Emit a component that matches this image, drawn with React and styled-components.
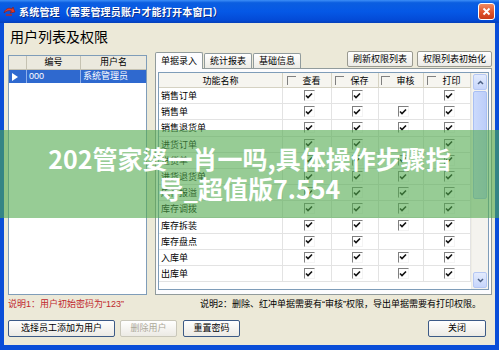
import React from "react";
import styled, { createGlobalStyle } from "styled-components";

const GlobalStyle = createGlobalStyle`
  html, body {
    margin: 0;
    padding: 0;
    background: #ffffff;
  }
  body {
    font-family: "Liberation Sans", "Noto Sans CJK SC", sans-serif;
  }
`;

const rows = [
  ["销售订单", 1, 1, 0, 1],
  ["销售单", 1, 1, 1, 1],
  ["销售退货单", 1, 1, 1, 1],
  ["进货订单", 1, 1, 0, 1],
  ["进货单", 1, 1, 1, 1],
  ["进货退货单", 1, 1, 1, 1],
  ["库存报溢", 1, 1, 1, 1],
  ["库存调拨", 1, 1, 1, 1],
  ["库存拆装", 1, 1, 1, 1],
  ["库存盘点", 1, 1, 0, 1],
  ["入库单", 1, 1, 1, 1],
  ["出库单", 1, 1, 1, 1],
];

const columns = ["查看", "保存", "审核", "打印"];
const colWidths = "124px 49px 47px 45px 47px";

const Window = styled.div`
  position: relative;
  width: 499px;
  height: 350px;
  overflow: hidden;
  display: flex;
  flex-direction: column;
`;

const TitleBar = styled.div`
  height: 23px;
  flex: none;
  display: flex;
  align-items: center;
  padding: 0 4px 0 3px;
  background: linear-gradient(to bottom, #3d8ef7 0%, #0b5ee0 12%, #0558e6 50%, #034ad6 88%, #0540b8 100%);
  color: #ffffff;
`;

const TitleText = styled.span`
  margin-left: 3px;
  font-size: 10px;
  font-weight: bold;
  letter-spacing: 0.2px;
  text-shadow: 1px 1px 0 #0a2f8c;
`;

const CloseButton = styled.div`
  margin-left: auto;
  width: 15px;
  height: 15px;
  border: 1px solid #ffffff;
  border-radius: 3px;
  background: linear-gradient(to bottom, #f08a62 0%, #e0532b 55%, #c83c1a 100%);
  display: flex;
  align-items: center;
  justify-content: center;
`;

const Body = styled.div`
  flex: 1;
  display: flex;
  flex-direction: column;
  background: #ece9d8;
  border: 4px solid #0a4ed8;
  border-top: none;
  border-bottom-width: 5px;
  padding: 0 3px 0 4px;
  font-size: 9px;
  color: #000000;
`;

const Heading = styled.div`
  height: 28px;
  line-height: 28px;
  padding-left: 2px;
  font-size: 14px;
`;

const Main = styled.div`
  height: 244px;
  display: flex;
`;

const UserGrid = styled.div`
  width: 141px;
  margin-top: 4px;
  border: 1px solid #7f9db9;
  background: #ffffff;
  box-sizing: border-box;
`;

const UserRow = styled.div`
  display: grid;
  grid-template-columns: 18px 54px 1fr;
  height: 13px;
  line-height: 13px;
  background: ${p => (p.header ? "#ebe9de" : p.selected ? "#2f69cf" : "#ffffff")};
  color: ${p => (p.selected ? "#ffffff" : "#000000")};
  border-bottom: 1px solid ${p => (p.header ? "#c5c2b2" : "#ffffff")};
`;

const UserCell = styled.div`
  border-right: 1px solid ${p => (p.selected ? "#8fb0ea" : "#c5c2b2")};
  padding-left: ${p => (p.center ? "0" : "2px")};
  text-align: ${p => (p.center ? "center" : "left")};
  overflow: hidden;
  white-space: nowrap;
  &:last-child {
    border-right: none;
  }
`;

const Indicator = styled.div`
  display: flex;
  align-items: center;
  padding-left: 3px;
  border-right: 1px solid #8fb0ea;
`;

const RightPanel = styled.div`
  flex: 1;
  margin-left: 8px;
  display: flex;
  flex-direction: column;
`;

const TopStrip = styled.div`
  height: 17px;
  display: flex;
  align-items: flex-end;
`;

const Tab = styled.div`
  height: ${p => (p.active ? "16px" : "14px")};
  line-height: ${p => (p.active ? "16px" : "14px")};
  padding: 0 5px;
  margin-right: 1px;
  border: 1px solid #919b9c;
  border-bottom: none;
  border-radius: 2px 2px 0 0;
  background: ${p => (p.active ? "#fcfcfe" : "linear-gradient(to bottom, #ffffff, #ecebe5)")};
  font-size: 9px;
  margin-bottom: ${p => (p.active ? "-1px" : "0")};
  position: relative;
  z-index: ${p => (p.active ? 1 : 0)};
`;

const Tools = styled.div`
  margin-left: auto;
  align-self: flex-start;
  display: flex;
  gap: 4px;
`;

const ToolButton = styled.div`
  height: 16px;
  box-sizing: border-box;
  line-height: 14px;
  padding: 0 5px;
  border: 1px solid #9a9a90;
  border-radius: 2px;
  background: linear-gradient(to bottom, #ffffff, #ecebe6);
`;

const TabPanel = styled.div`
  flex: 1;
  border: 1px solid #919b9c;
  background: #fcfcfe;
  padding: 3px 2px 4px 2px;
  display: flex;
`;

const TableBox = styled.div`
  flex: 1;
  display: flex;
  border: 1px solid #7f9db9;
  background: #ffffff;
  overflow: hidden;
`;

const Grid = styled.div`
  width: 312px;
  display: flex;
  flex-direction: column;
`;

const GridRow = styled.div`
  display: grid;
  grid-template-columns: ${colWidths};
  height: ${p => (p.header ? "15px" : "16.2px")};
  box-sizing: border-box;
  border-bottom: 1px solid ${p => (p.header ? "#d5d2c3" : "#e3e3e3")};
  background: ${p => (p.header ? "#f6f5f0" : "#ffffff")};
`;

const GridCell = styled.div`
  display: flex;
  align-items: center;
  justify-content: ${p => p.align || "center"};
  padding-left: ${p => (p.align === "flex-start" ? "2px" : "0")};
  border-right: 1px solid ${p => (p.header ? "#d5d2c3" : "#e3e3e3")};
  white-space: nowrap;
  overflow: hidden;
`;

const HeaderCheck = styled.span`
  width: 8px;
  height: 8px;
  border-top: 1px solid #808080;
  border-left: 1px solid #808080;
  margin-right: 6px;
  margin-left: -6px;
`;

const CheckBox = styled.span`
  width: 9px;
  height: 9px;
  border-top: 1px solid #808080;
  border-left: 1px solid #808080;
  border-right: 1px solid #f4f4f4;
  border-bottom: 1px solid #f4f4f4;
  margin-left: 4px;
  display: flex;
  align-items: center;
  justify-content: center;
`;

const ScrollBar = styled.div`
  width: 16px;
  display: flex;
  flex-direction: column;
  background: #f4f3ee;
  border-left: 1px solid #eeede5;
`;

const ArrowButton = styled.div`
  height: 14px;
  margin: 1px;
  border: 1px solid #b6c8f4;
  border-radius: 2px;
  background: linear-gradient(to bottom, #e3ebfd, #c6d5fb);
  display: flex;
  align-items: center;
  justify-content: center;
`;

const Thumb = styled.div`
  height: 106px;
  margin: 0 1px;
  border: 1px solid #a9bff3;
  border-radius: 2px;
  background: linear-gradient(to right, #cbdafc, #bccdf9);
`;

const Track = styled.div`
  flex: 1;
`;

const Notes = styled.div`
  height: 16px;
  display: grid;
  grid-template-columns: 192px 1fr;
  align-items: center;
`;

const Note = styled.span`
  color: ${p => p.color || "#000000"};
  white-space: nowrap;
`;

const ButtonRow = styled.div`
  margin-top: 9px;
  display: flex;
`;

const Button = styled.div`
  width: ${p => p.width}px;
  height: 17px;
  box-sizing: border-box;
  line-height: 15px;
  text-align: center;
  margin-left: ${p => p.gap || 0}px;
  border: 1px solid ${p => (p.disabled ? "#c9c7ba" : "#3c5a86")};
  border-radius: 2px;
  background: linear-gradient(to bottom, #ffffff, #eceae4);
  color: ${p => (p.disabled ? "#aca899" : "#000000")};
`;

const CloseBtn = styled(Button)`
  margin-left: auto;
  margin-right: 6px;
`;

const Overlay = styled.div`
  position: absolute;
  left: 0;
  top: 130px;
  width: 499px;
  height: 88px;
  background: rgba(82, 170, 78, 0.6);
  display: flex;
  align-items: center;
  justify-content: center;
  text-align: center;
  color: #ffffff;
  font-family: "Noto Sans CJK SC", "Noto Sans", sans-serif;
  font-weight: bold;
  font-size: 25px;
  line-height: 30px;
  padding-bottom: 2px;
  box-sizing: border-box;
`;

function AppIcon() {
  return (
    <svg width="13" height="12" viewBox="0 0 13 12">
      <path d="M1 7 C2 3 6 1 9 3 L10 1 L12 6 L7 7 L8.5 5 C6 4 3 5 1 7 Z" fill="#e03a2a" stroke="#8a1a10" strokeWidth="0.6" />
      <path d="M3 9 L9 9" stroke="#c02a1a" strokeWidth="1.4" />
    </svg>
  );
}

function Check() {
  return (
    <CheckBox>
      <svg width="8" height="8" viewBox="0 0 8 8">
        <path d="M1 3.5 L3 5.5 L7 1.5" fill="none" stroke="#111" strokeWidth="1.6" />
      </svg>
    </CheckBox>
  );
}

function Arrow({ down }) {
  return (
    <svg width="7" height="5" viewBox="0 0 7 5">
      <path d={down ? "M1 1 L3.5 3.5 L6 1" : "M1 4 L3.5 1.5 L6 4"} fill="none" stroke="#4d6185" strokeWidth="1.5" />
    </svg>
  );
}

export default function App() {
  return (
    <Window>
      <GlobalStyle />
      <TitleBar>
        <AppIcon />
        <TitleText>系统管理（需要管理员账户才能打开本窗口）</TitleText>
        <CloseButton>
          <svg width="9" height="9" viewBox="0 0 9 9">
            <path d="M1.5 1.5 L7.5 7.5 M7.5 1.5 L1.5 7.5" stroke="#ffffff" strokeWidth="1.8" />
          </svg>
        </CloseButton>
      </TitleBar>
      <Body>
        <Heading>用户列表及权限</Heading>
        <Main>
          <UserGrid>
            <UserRow header>
              <UserCell />
              <UserCell center>编号</UserCell>
              <UserCell center>用户名</UserCell>
            </UserRow>
            <UserRow selected>
              <Indicator>
                <svg width="6" height="8" viewBox="0 0 6 8">
                  <path d="M0 0 L6 4 L0 8 Z" fill="#ffffff" />
                </svg>
              </Indicator>
              <UserCell selected>000</UserCell>
              <UserCell selected>系统管理员</UserCell>
            </UserRow>
          </UserGrid>
          <RightPanel>
            <TopStrip>
              <Tab active>单据录入</Tab>
              <Tab>统计报表</Tab>
              <Tab>基础信息</Tab>
              <Tools>
                <ToolButton>刷新权限列表</ToolButton>
                <ToolButton>权限列表初始化</ToolButton>
              </Tools>
            </TopStrip>
            <TabPanel>
              <TableBox>
                <Grid>
                  <GridRow header>
                    <GridCell header>功能名称</GridCell>
                    {columns.map(c => (
                      <GridCell header key={c}>
                        <HeaderCheck />
                        {c}
                      </GridCell>
                    ))}
                  </GridRow>
                  {rows.map(([name, ...flags]) => (
                    <GridRow key={name}>
                      <GridCell align="flex-start">{name}</GridCell>
                      {flags.map((f, i) => (
                        <GridCell key={i}>{f === 1 ? <Check /> : null}</GridCell>
                      ))}
                    </GridRow>
                  ))}
                </Grid>
                <ScrollBar>
                  <ArrowButton>
                    <Arrow />
                  </ArrowButton>
                  <Thumb />
                  <Track />
                  <ArrowButton>
                    <Arrow down />
                  </ArrowButton>
                </ScrollBar>
              </TableBox>
            </TabPanel>
          </RightPanel>
        </Main>
        <Notes>
          <Note color="#c0282d">说明1：用户初始密码为“123”</Note>
          <Note>说明2：删除、红冲单据需要有“审核”权限，导出单据需要有打印权限。</Note>
        </Notes>
        <ButtonRow>
          <Button width={107}>选择员工添加为用户</Button>
          <Button width={57} gap={5} disabled>删除用户</Button>
          <Button width={57} gap={6}>重置密码</Button>
          <CloseBtn width={58}>关闭</CloseBtn>
        </ButtonRow>
      </Body>
      <Overlay>
        202管家婆一肖一吗,具体操作步骤指
        <br />
        导_超值版7.554
      </Overlay>
    </Window>
  );
}
